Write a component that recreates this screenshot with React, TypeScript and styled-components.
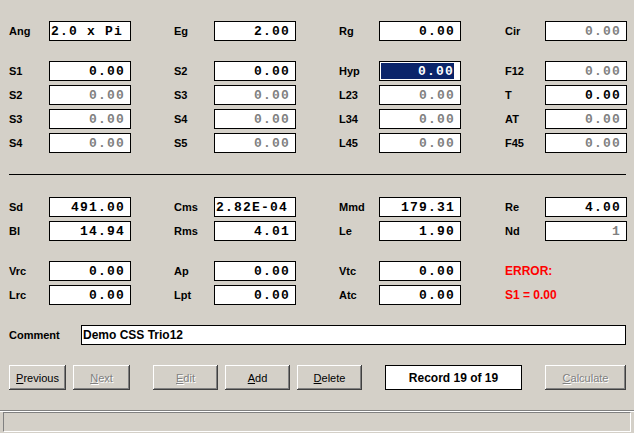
import React from "react";
import styled, { createGlobalStyle, css } from "styled-components";

const Global = createGlobalStyle`
  html, body { margin: 0; padding: 0; background: #d4d0c8; }
  #root { width: 634px; height: 433px; }
  * { box-sizing: border-box; }
`;

const Window = styled.div`
  width: 634px;
  height: 433px;
  background: #d4d0c8;
  display: flex;
  flex-direction: column;
  font-family: "Liberation Sans", Arial, sans-serif;
  overflow: hidden;
`;

const Body = styled.div`
  padding: 21px 8px 0 9px;
  display: flex;
  flex-direction: column;
`;

const Section = styled.div<{ $mt?: number }>`
  display: flex;
  flex-direction: column;
  gap: 4px;
  margin-top: ${(p) => p.$mt ?? 20}px;
`;

const Row = styled.div`
  display: grid;
  grid-template-columns: 165px 165px 166px auto;
  height: 20px;
`;

const Cell = styled.div`
  display: flex;
  align-items: center;
`;

const Label = styled.span<{ $w?: number }>`
  width: ${(p) => p.$w ?? 40}px;
  flex-shrink: 0;
  font-weight: bold;
  font-size: 11px;
  color: #000;
`;

type FieldKind = "on" | "off" | "sel";

const Field = styled.div<{ $kind: FieldKind; $left?: boolean }>`
  width: 82px;
  height: 20px;
  flex-shrink: 0;
  border: 1px solid #000;
  background: #fff;
  display: flex;
  align-items: center;
  justify-content: ${(p) => (p.$left ? "flex-start" : "flex-end")};
  padding: ${(p) => (p.$left ? "0 0 0 1px" : "0 5px 0 0")};
  font-family: "Liberation Mono", "Courier New", monospace;
  font-weight: bold;
  font-size: 13px;
  letter-spacing: 1.2px;
  white-space: nowrap;
  overflow: hidden;
  color: ${(p) => (p.$kind === "off" ? "#808080" : "#000")};
  ${(p) =>
    p.$kind === "sel" &&
    css`
      padding: 1px 7px 1px 1px;
      align-items: stretch;
    `}
`;

const Selection = styled.span`
  flex: 1;
  background: #0a246a;
  color: #fff;
  display: flex;
  align-items: center;
  justify-content: flex-end;
  margin-right: -1px;
`;

const ErrorText = styled.span`
  color: #ff0000;
  font-weight: bold;
  font-size: 12px;
`;

const Separator = styled.div`
  height: 1px;
  background: #000;
  margin-top: 21px;
`;

const CommentRow = styled.div`
  display: flex;
  align-items: center;
  margin-top: 20px;
  height: 20px;
`;

const CommentField = styled.div`
  flex: 1;
  height: 20px;
  border: 1px solid #000;
  background: #fff;
  display: flex;
  align-items: center;
  padding-left: 1px;
  font-weight: bold;
  font-size: 12px;
`;

const ButtonRow = styled.div`
  display: flex;
  margin-top: 20px;
  height: 25px;
`;

const Button = styled.button<{ $w: number; $gap?: number; $disabled?: boolean }>`
  width: ${(p) => p.$w}px;
  height: 25px;
  margin-left: ${(p) => p.$gap ?? 0}px;
  padding: 0;
  border: none;
  background: #d4d0c8;
  font-family: "Liberation Sans", Arial, sans-serif;
  font-size: 11px;
  color: ${(p) => (p.$disabled ? "#808080" : "#000")};
  text-shadow: ${(p) => (p.$disabled ? "1px 1px 0 #fff" : "none")};
  box-shadow: inset -1px -1px 0 #404040, inset 1px 1px 0 #fff,
    inset -2px -2px 0 #808080, inset 2px 2px 0 #d4d0c8;
  u { text-decoration: underline; }
`;

const RecordBox = styled.div<{ $gap: number }>`
  width: 137px;
  height: 25px;
  margin-left: ${(p) => p.$gap}px;
  border: 1px solid #000;
  background: #fff;
  display: flex;
  align-items: center;
  justify-content: center;
  font-weight: bold;
  font-size: 12px;
`;

const StatusBar = styled.div`
  margin-top: auto;
  border-top: 1px solid #808080;
  box-shadow: inset 0 1px 0 #fff;
  padding: 1px 3px 1px 3px;
`;

const StatusPanel = styled.div`
  height: 20px;
  border-top: 1px solid #808080;
  border-left: 1px solid #808080;
  border-bottom: 1px solid #fff;
  border-right: 1px solid #fff;
`;

type CellDef =
  | { label: string; value: string; kind?: FieldKind; left?: boolean }
  | { error: string };

const rows1: CellDef[][] = [
  [
    { label: "S1", value: "0.00" },
    { label: "S2", value: "0.00" },
    { label: "Hyp", value: "0.00", kind: "sel" },
    { label: "F12", value: "0.00", kind: "off" },
  ],
  [
    { label: "S2", value: "0.00", kind: "off" },
    { label: "S3", value: "0.00", kind: "off" },
    { label: "L23", value: "0.00", kind: "off" },
    { label: "T", value: "0.00" },
  ],
  [
    { label: "S3", value: "0.00", kind: "off" },
    { label: "S4", value: "0.00", kind: "off" },
    { label: "L34", value: "0.00", kind: "off" },
    { label: "AT", value: "0.00", kind: "off" },
  ],
  [
    { label: "S4", value: "0.00", kind: "off" },
    { label: "S5", value: "0.00", kind: "off" },
    { label: "L45", value: "0.00", kind: "off" },
    { label: "F45", value: "0.00", kind: "off" },
  ],
];

const rowsTop: CellDef[][] = [
  [
    { label: "Ang", value: "2.0 x Pi", left: true },
    { label: "Eg", value: "2.00" },
    { label: "Rg", value: "0.00" },
    { label: "Cir", value: "0.00", kind: "off" },
  ],
];

const rows2: CellDef[][] = [
  [
    { label: "Sd", value: "491.00" },
    { label: "Cms", value: "2.82E-04", left: true },
    { label: "Mmd", value: "179.31" },
    { label: "Re", value: "4.00" },
  ],
  [
    { label: "Bl", value: "14.94" },
    { label: "Rms", value: "4.01" },
    { label: "Le", value: "1.90" },
    { label: "Nd", value: "1", kind: "off" },
  ],
];

const rows3: CellDef[][] = [
  [
    { label: "Vrc", value: "0.00" },
    { label: "Ap", value: "0.00" },
    { label: "Vtc", value: "0.00" },
    { error: "ERROR:" },
  ],
  [
    { label: "Lrc", value: "0.00" },
    { label: "Lpt", value: "0.00" },
    { label: "Atc", value: "0.00" },
    { error: "S1 = 0.00" },
  ],
];

function renderRows(rows: CellDef[][]) {
  return rows.map((r, i) => (
    <Row key={i}>
      {r.map((c, j) => (
        <Cell key={j}>
          {"error" in c ? (
            <ErrorText>{c.error}</ErrorText>
          ) : (
            <>
              <Label>{c.label}</Label>
              <Field $kind={c.kind ?? "on"} $left={c.left}>
                {c.kind === "sel" ? <Selection>{c.value}</Selection> : c.value}
              </Field>
            </>
          )}
        </Cell>
      ))}
    </Row>
  ));
}

export default function App() {
  return (
    <>
      <Global />
      <Window>
        <Body>
          <Section $mt={0}>{renderRows(rowsTop)}</Section>
          <Section>{renderRows(rows1)}</Section>
          <Separator />
          <Section $mt={22}>{renderRows(rows2)}</Section>
          <Section>{renderRows(rows3)}</Section>
          <CommentRow>
            <Label $w={72}>Comment</Label>
            <CommentField>Demo CSS Trio12</CommentField>
          </CommentRow>
          <ButtonRow>
            <Button $w={57}>
              <u>P</u>revious
            </Button>
            <Button $w={57} $gap={7} $disabled>
              <u>N</u>ext
            </Button>
            <Button $w={65} $gap={23} $disabled>
              <u>E</u>dit
            </Button>
            <Button $w={65} $gap={7}>
              <u>A</u>dd
            </Button>
            <Button $w={65} $gap={7}>
              <u>D</u>elete
            </Button>
            <RecordBox $gap={23}>Record 19 of 19</RecordBox>
            <Button $w={81} $gap={23} $disabled>
              <u>C</u>alculate
            </Button>
          </ButtonRow>
        </Body>
        <StatusBar>
          <StatusPanel />
        </StatusBar>
      </Window>
    </>
  );
}
